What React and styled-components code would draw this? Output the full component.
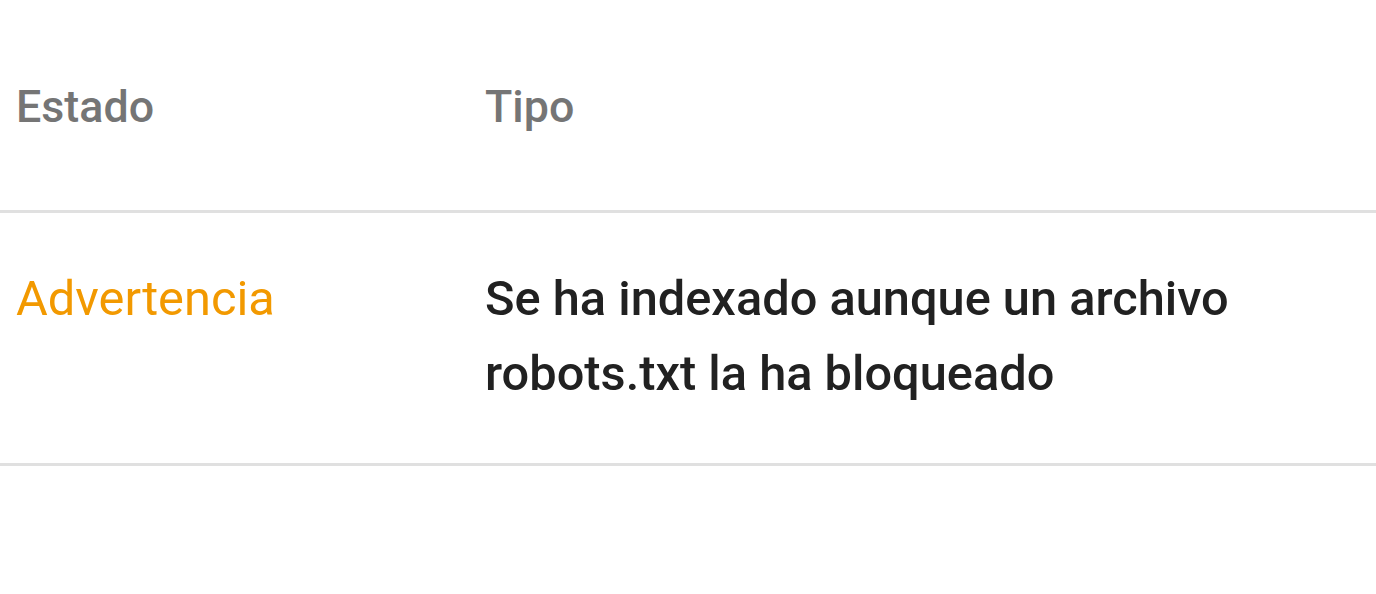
import React from "react";
import styled, { createGlobalStyle } from "styled-components";

const GlobalStyle = createGlobalStyle`
  body {
    margin: 0;
    background: #fff;
    font-family: Roboto, "Liberation Sans", sans-serif;
  }
`;

const Table = styled.table`
  width: 100%;
  border-collapse: collapse;
  table-layout: fixed;
`;

const Th = styled.th`
  box-sizing: border-box;
  text-align: start;
  font-size: 44.8px;
  line-height: 75px;
  font-weight: 500;
  color: #757575;
  padding: 69px 0 66px 16px;
  border-bottom: 3px solid #e0e0e0;
  width: ${(props) => props.width || "auto"};
`;

const Td = styled.td`
  vertical-align: top;
  font-size: 48.75px;
  line-height: 75px;
  font-weight: ${(props) => (props.strong ? 500 : 400)};
  color: ${(props) => props.color || "#212121"};
  padding: 48px 60px 52px 16px;
  border-bottom: 3px solid #e0e0e0;
`;

const rows = [
  {
    estado: "Advertencia",
    color: "#f29900",
    tipo: "Se ha indexado aunque un archivo robots.txt la ha bloqueado",
  },
];

export default function App() {
  return (
    <>
      <GlobalStyle />
      <Table>
        <thead>
          <tr>
            <Th width="469px">Estado</Th>
            <Th>Tipo</Th>
          </tr>
        </thead>
        <tbody>
          {rows.map((item, i) => (
            <tr key={i}>
              <Td color={item.color}>{item.estado}</Td>
              <Td strong>{item.tipo}</Td>
            </tr>
          ))}
        </tbody>
      </Table>
    </>
  );
}
